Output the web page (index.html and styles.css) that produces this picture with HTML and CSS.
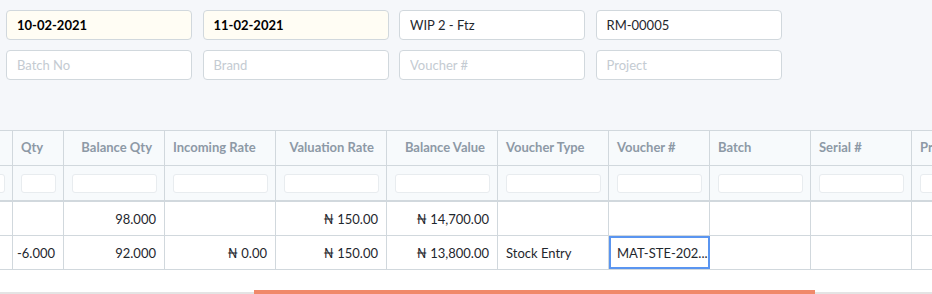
FILE: index.html
```html
<!DOCTYPE html>
<html lang="en">
<head>
  <meta charset="UTF-8" />
  <title>Stock Ledger</title>
  <meta name="viewport" content="width=device-width, initial-scale=1.0"/>
  <link rel="stylesheet" href="styles.css">
</head>
<body>
  <div class="filters">
    <input type="text" class="field mandatory" value="10-02-2021">
    <input type="text" class="field mandatory" value="11-02-2021">
    <input type="text" class="field" value="WIP 2 - Ftz">
    <input type="text" class="field" value="RM-00005">
    <input type="text" class="field" placeholder="Batch No">
    <input type="text" class="field" placeholder="Brand">
    <input type="text" class="field" placeholder="Voucher #">
    <input type="text" class="field" placeholder="Project">
  </div>

  <div class="datatable">
    <div class="dt-scroll">
      <div class="dt-row dt-head">
        <div class="dt-cell c0"></div>
        <div class="dt-cell c1">Qty</div>
        <div class="dt-cell c2 right">Balance Qty</div>
        <div class="dt-cell c3">Incoming Rate</div>
        <div class="dt-cell c3 right">Valuation Rate</div>
        <div class="dt-cell c3 right">Balance Value</div>
        <div class="dt-cell c3">Voucher Type</div>
        <div class="dt-cell c2">Voucher #</div>
        <div class="dt-cell c2">Batch</div>
        <div class="dt-cell c2">Serial #</div>
        <div class="dt-cell c2">Project</div>
      </div>
      <div class="dt-row dt-filter">
        <div class="dt-cell c0"><input type="text"></div>
        <div class="dt-cell c1"><input type="text"></div>
        <div class="dt-cell c2"><input type="text"></div>
        <div class="dt-cell c3"><input type="text"></div>
        <div class="dt-cell c3"><input type="text"></div>
        <div class="dt-cell c3"><input type="text"></div>
        <div class="dt-cell c3"><input type="text"></div>
        <div class="dt-cell c2"><input type="text"></div>
        <div class="dt-cell c2"><input type="text"></div>
        <div class="dt-cell c2"><input type="text"></div>
        <div class="dt-cell c2"><input type="text"></div>
      </div>
      <div class="dt-body">
        <div class="dt-row">
          <div class="dt-cell c0"></div>
          <div class="dt-cell c1 num"></div>
          <div class="dt-cell c2 num">98.000</div>
          <div class="dt-cell c3 num"></div>
          <div class="dt-cell c3 num">₦ 150.00</div>
          <div class="dt-cell c3 num">₦ 14,700.00</div>
          <div class="dt-cell c3"></div>
          <div class="dt-cell c2"></div>
          <div class="dt-cell c2"></div>
          <div class="dt-cell c2"></div>
          <div class="dt-cell c2"></div>
        </div>
        <div class="dt-row">
          <div class="dt-cell c0"></div>
          <div class="dt-cell c1 num">-6.000</div>
          <div class="dt-cell c2 num">92.000</div>
          <div class="dt-cell c3 num">₦ 0.00</div>
          <div class="dt-cell c3 num">₦ 150.00</div>
          <div class="dt-cell c3 num">₦ 13,800.00</div>
          <div class="dt-cell c3">Stock Entry</div>
          <div class="dt-cell c2 focused">MAT-STE-202...</div>
          <div class="dt-cell c2"></div>
          <div class="dt-cell c2"></div>
          <div class="dt-cell c2"></div>
        </div>
      </div>
    </div>
    <div class="scrollbar"><div class="thumb"></div></div>
  </div>
</body>
</html>
```

FILE: styles.css
```css
body { margin: 0; background: #f5f7fa; font-family: Lato, "Noto Sans", sans-serif; font-size: 13px; color: #1f272e; }

.filters {
  display: grid; grid-template-columns: repeat(4, 186px); column-gap: 10.5px; row-gap: 10px;
  padding: 10px 0 50px 6px;
}
.field {
  height: 30px; box-sizing: border-box; padding: 0 10px; font: inherit; color: #1f272e;
  border: 1px solid #d1d8dd; border-radius: 4px; background: #fff; outline: none;
}
.field::placeholder { color: #c4cbd2; }
.field.mandatory { background: #fffdf4; font-weight: 700; color: #000; }

.datatable { background: #fff; overflow: hidden; }
.dt-scroll { margin-left: -90px; width: max-content; border-top: 1px solid #d1d8dd; }
.dt-row { display: flex; border-bottom: 1px solid #d1d8dd; }
.dt-cell {
  flex: none; box-sizing: border-box; border-right: 1px solid #d1d8dd;
  height: 33px; padding: 0 8px; display: flex; align-items: center; white-space: nowrap; overflow: hidden;
}
.c0 { width: 103px; }
.c1 { width: 51px; }
.c2 { width: 101px; }
.c3 { width: 111px; }

.dt-head { background: #f7fafc; }
.dt-head .dt-cell { height: 34px; padding-bottom: 2px; font-weight: 700; color: #8d99a6; }
.dt-head .right { justify-content: flex-end; padding-right: 12px; }

.dt-filter { background: #f7fafc; border-bottom: 2px solid #d1d8dd; }
.dt-filter .dt-cell { height: 34px; padding: 0 7px 0 8px; }
.dt-filter input {
  width: 100%; height: 19px; box-sizing: border-box; border: 1px solid #e8ecef; border-radius: 3px;
  background: #fff; outline: none;
}

.num { justify-content: flex-end; }
.focused { border: 2px solid #5a95f0; padding-left: 6px; }

.dt-body { padding-bottom: 20px; }
.scrollbar { height: 4px; box-shadow: inset 0 -2px #e4e4e4; display: flex; }
.thumb { width: 561px; margin-left: 254px; background: #f0896a; }
```
